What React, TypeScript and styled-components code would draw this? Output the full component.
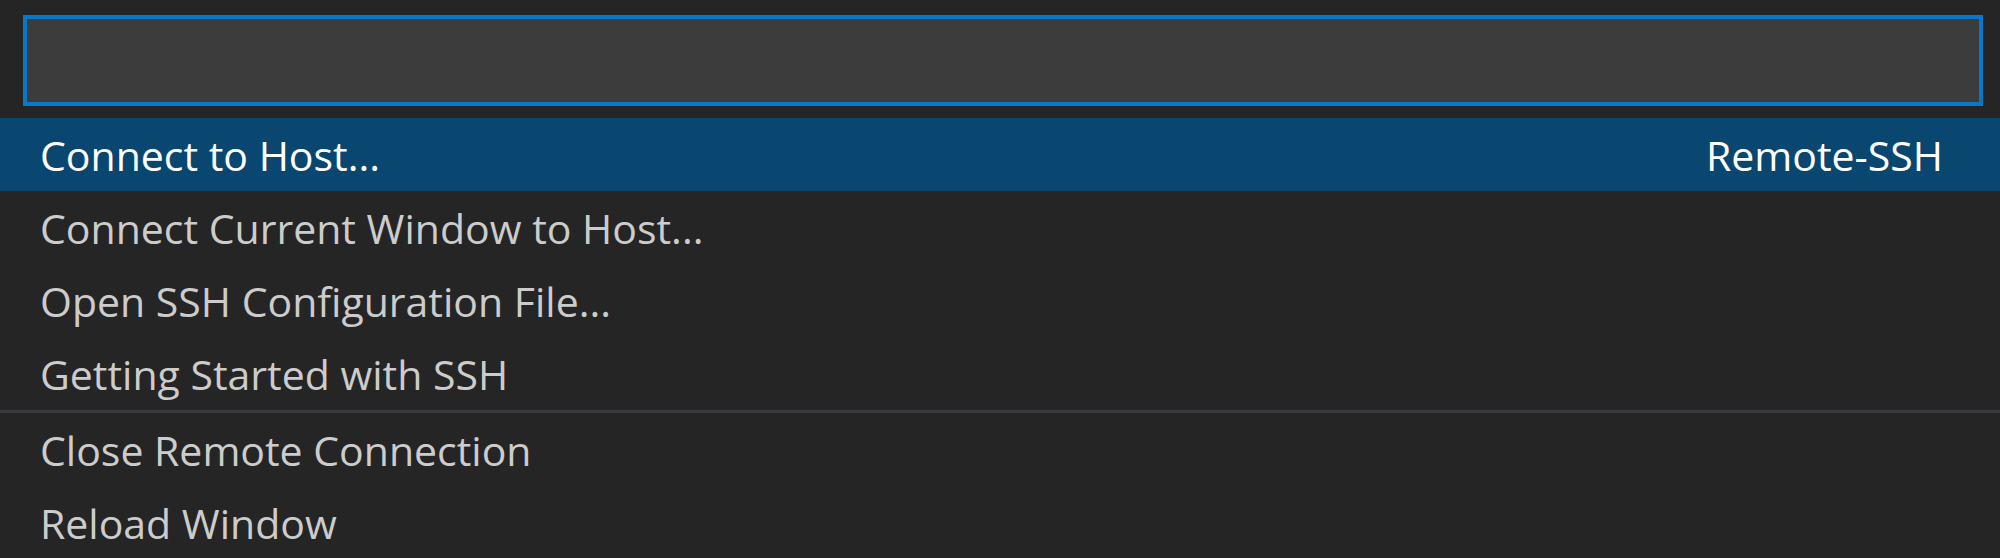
import React from 'react';
import styled, { createGlobalStyle } from 'styled-components';

const GlobalStyle = createGlobalStyle`
  html, body {
    margin: 0;
    padding: 0;
    background: #252526;
    overflow: hidden;
  }
`;

const Container = styled.div`
  display: flex;
  flex-direction: column;
  width: 2000px;
  height: 558px;
  background: #252526;
  font-family: 'Open Sans', 'Noto Sans', sans-serif;
  font-size: 41px;
  color: #cccccc;
  overflow: hidden;
`;

const InputBar = styled.div`
  flex: 0 0 auto;
  padding: 15px 17px 0 23px;
`;

const Input = styled.div`
  box-sizing: border-box;
  height: 91px;
  background: #3c3c3c;
  border: 4px solid #0a78c8;
`;

const List = styled.div`
  display: flex;
  flex-direction: column;
  margin-top: 12px;
`;

const Row = styled.div<{ $active?: boolean; $separator?: boolean }>`
  display: flex;
  justify-content: space-between;
  align-items: center;
  flex: 0 0 auto;
  height: 73px;
  line-height: 73px;
  padding: 2px 57px 0 40px;
  box-sizing: content-box;
  height: 71px;
  white-space: nowrap;
  background: ${(p) => (p.$active ? '#094771' : 'transparent')};
  color: ${(p) => (p.$active ? '#ffffff' : '#cccccc')};
  border-top: ${(p) => (p.$separator ? '3px solid #3a3a3e' : 'none')};
`;

const Label = styled.span`
  line-height: 71px;
`;

const Detail = styled.span`
  line-height: 71px;
`;

const items = [
  { label: 'Connect to Host...', detail: 'Remote-SSH', active: true },
  { label: 'Connect Current Window to Host...' },
  { label: 'Open SSH Configuration File...' },
  { label: 'Getting Started with SSH' },
  { label: 'Close Remote Connection', separator: true },
  { label: 'Reload Window' },
];

export default function App() {
  return (
    <Container>
      <GlobalStyle />
      <InputBar>
        <Input />
      </InputBar>
      <List>
        {items.map((item) => (
          <Row key={item.label} $active={item.active} $separator={item.separator}>
            <Label>{item.label}</Label>
            {item.detail && <Detail>{item.detail}</Detail>}
          </Row>
        ))}
      </List>
    </Container>
  );
}
